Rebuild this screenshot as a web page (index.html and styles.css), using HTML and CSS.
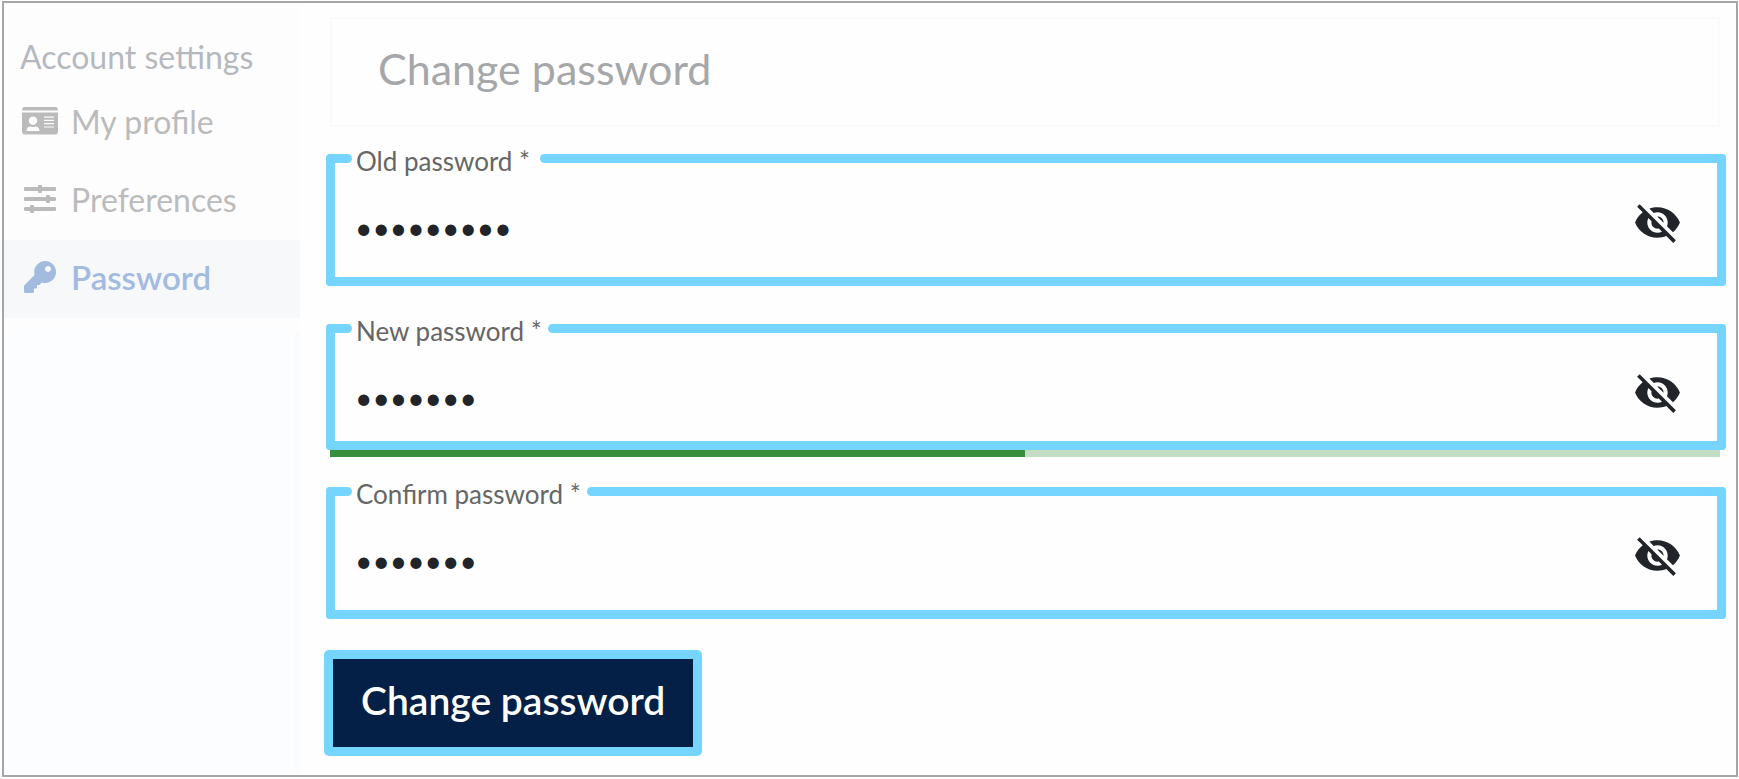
FILE: index.html
```html
<!DOCTYPE html>
<html lang="en">
<head>
<meta charset="utf-8">
<meta name="viewport" content="width=device-width, initial-scale=1">
<title>Change password</title>
<link rel="stylesheet" href="styles.css">
</head>
<body>
<svg class="sprite" aria-hidden="true">
  <symbol id="eye-off" viewBox="0 0 24 24">
    <path d="M12 7c2.76 0 5 2.24 5 5 0 .65-.13 1.26-.36 1.83l2.92 2.92c1.51-1.26 2.7-2.89 3.43-4.75-1.73-4.39-6-7.5-11-7.5-1.4 0-2.74.25-3.98.7l2.16 2.16C10.74 7.13 11.35 7 12 7zM2 4.27l2.28 2.28.46.46C3.08 8.3 1.78 10.02 1 12c1.73 4.39 6 7.5 11 7.5 1.55 0 3.03-.3 4.38-.84l.42.42L19.73 22 21 20.73 3.27 3 2 4.27zM7.53 9.8l1.55 1.55c-.05.21-.08.43-.08.65 0 1.66 1.34 3 3 3 .22 0 .44-.03.65-.08l1.55 1.55c-.67.33-1.41.53-2.2.53-2.76 0-5-2.24-5-5 0-.79.2-1.53.53-2.2zm4.31-.78l3.15 3.15.02-.16c0-1.66-1.34-3-3-3l-.17.01z"/>
  </symbol>
</svg>
<div class="frame">
  <nav class="sidebar" aria-label="Account settings">
    <div class="menu">
      <h2 class="menu-title">Account settings</h2>
      <a class="menu-item" href="#profile">
        <svg class="menu-icon" viewBox="0 0 36 32" aria-hidden="true"><path fill-rule="evenodd" d="M0 5.500V5a3 3 0 0 1 3-3h30a3 3 0 0 1 3 3v.5zM0 7.500h36V26.500a3 3 0 0 1-3 3H3a3 3 0 0 1-3-3zM11 11.500a4.200 4.200 0 1 0 .01 0zM4.500 26h13c0-3-1.500-4.500-4-4.500-1.500.7-3.500.7-5 0-2.500 0-4 1.500-4 4.500zM22 11.500v1.200h10v-1.200zM22 14.800v1.200h10v-1.200zM22 18.100v1.200h10v-1.200zM22 21.400v1.200h10v-1.200z"/></svg>
        <span>My profile</span>
      </a>
      <a class="menu-item" href="#preferences">
        <svg class="menu-icon" viewBox="0 0 36 32" aria-hidden="true"><path d="M3 4h13V3q0-1 1-1h2q1 0 1 1v1h13q1 0 1 1v2q0 1-1 1H20v1q0 1-1 1h-2q-1 0-1-1V8H3q-1 0-1-1V5q0-1 1-1zM3 14h21v-1q0-1 1-1h2q1 0 1 1v1h5q1 0 1 1v2q0 1-1 1h-5v1q0 1-1 1h-2q-1 0-1-1v-1H3q-1 0-1-1v-2q0-1 1-1zM3 24h5v-1q0-1 1-1h2q1 0 1 1v1h21q1 0 1 1v2q0 1-1 1H12v1q0 1-1 1H9q-1 0-1-1v-1H3q-1 0-1-1v-2q0-1 1-1z"/></svg>
        <span>Preferences</span>
      </a>
      <a class="menu-item active" href="#password" aria-current="page">
        <svg class="menu-icon" viewBox="0 0 36 32" aria-hidden="true"><path fill-rule="evenodd" d="M23 0a11 11 0 1 1-3.200 21.500L17.500 24H15v2.500q0 1-1 1h-2V30.500q0 1.500-1.500 1.500h-7Q2 32 2 30.500V25.300q0-.8.600-1.400L12.600 14A11 11 0 0 1 23 0zM26 5a3 3 0 1 0 .01 0z"/></svg>
        <span>Password</span>
      </a>
    </div>
  </nav>
  <main class="content">
    <header class="card"><h1 class="card-title">Change password</h1></header>
    <form class="form">
      <div class="field">
        <div class="field-top"><label class="field-label" for="old">Old password *</label></div>
        <div class="field-body">
          <input class="field-input" id="old" type="password" value="secret123" required>
          <button class="reveal" type="button" aria-label="Show old password"><svg class="reveal-icon"><use href="#eye-off"/></svg></button>
        </div>
      </div>
      <div class="field">
        <div class="field-top"><label class="field-label" for="new">New password *</label></div>
        <div class="field-body compact">
          <input class="field-input" id="new" type="password" value="secret1" required>
          <button class="reveal" type="button" aria-label="Show new password"><svg class="reveal-icon"><use href="#eye-off"/></svg></button>
        </div>
        <progress class="strength" value="50" max="100" aria-label="Password strength"></progress>
      </div>
      <div class="field">
        <div class="field-top"><label class="field-label" for="confirm">Confirm password *</label></div>
        <div class="field-body">
          <input class="field-input" id="confirm" type="password" value="secret1" required>
          <button class="reveal" type="button" aria-label="Show confirmed password"><svg class="reveal-icon"><use href="#eye-off"/></svg></button>
        </div>
      </div>
      <button class="submit" type="submit">Change password</button>
    </form>
  </main>
</div>
</body>
</html>
```
FILE: styles.css
```css
* { box-sizing: border-box; }

body {
  margin: 0;
  padding: 1px 1px 2px 2px;
  min-height: 100vh;
  display: flex;
  background: #fff;
  font-family: Lato, "Open Sans", sans-serif;
}

.sprite { display: none; }

.frame {
  flex: 1;
  display: flex;
  border: 2px solid #a6a6a6;
  background: #fefefe;
}

.sidebar {
  flex: 0 0 296px;
  background: #fbfdff;
  border-right: 5px solid #fbfbfb;
}

.menu {
  margin-right: -5px;
  padding: 29px 0 13px;
  background: #fdfdfd;
}

.menu-title {
  margin: 0;
  padding: 0 16px 2px;
  font-size: 32px;
  font-weight: 400;
  line-height: 50px;
  color: #b5b9be;
}

.menu-item {
  display: flex;
  align-items: center;
  gap: 13px;
  height: 78px;
  padding: 0 18px 4px;
  font-size: 32px;
  color: #bbb;
  text-decoration: none;
}

.menu-item.active {
  background: #f6f8fa;
  color: #a3bbdf;
  font-size: 33px;
  font-weight: 600;
}

.menu-icon {
  width: 36px;
  height: 32px;
  fill: currentColor;
}

.content {
  flex: 1;
  padding: 14px 10px 16px 24px;
}

.card {
  margin: 0 6px 27px;
  padding: 23px 46px 29px;
  border: 2px solid #fafafa;
}

.card-title {
  margin: 0;
  font-size: 43px;
  font-weight: 400;
  line-height: 54px;
  color: #a6a7a9;
}

.form { padding-left: 2px; }

.field { margin-bottom: 38px; }

.field-top {
  display: flex;
  align-items: center;
  height: 9px;
}

.field-top::before,
.field-top::after {
  content: "";
  height: 9px;
  background: #75d5ff;
}

.field-top::before {
  width: 26px;
  border-radius: 4px 5px 5px 0;
}

.field-top::after {
  flex: 1;
  border-radius: 5px 4px 0 5px;
}

.field-label {
  min-width: 188px;
  padding: 4px 6px 0 4px;
  font-size: 26px;
  line-height: 32px;
  color: #666;
}

.field-body {
  display: flex;
  align-items: flex-start;
  height: 123px;
  padding: 0 35px 0 20px;
  border: 9px solid #75d5ff;
  border-top: 0;
  border-radius: 0 0 4px 4px;
}

.field-body.compact { height: 117px; }

.field-input {
  flex: 1;
  min-width: 0;
  height: 108px;
  padding: 19px 0 0;
  border: 0;
  outline: 0;
  background: transparent;
  font: 30px/40px Lato, "Open Sans", sans-serif;
  color: #212529;
}

.reveal {
  margin-top: 35px;
  padding: 0;
  border: 0;
  background: none;
  color: #212529;
}

.reveal-icon {
  display: block;
  width: 49px;
  height: 49px;
  fill: currentColor;
}

.strength {
  display: block;
  width: calc(100% - 10px);
  height: 7px;
  margin: 0 0 -8px 4px;
  border: 0;
  appearance: none;
  background: #c3dcc4;
}

.strength::-webkit-progress-bar { background: #c3dcc4; }

.strength::-webkit-progress-value { background: #388e3c; }

.submit {
  margin: -7px 0 0 -2px;
  padding: 15px 28px 21px;
  border: 9px solid #75d5ff;
  border-radius: 5px;
  background: #052046;
  font: 600 39px/52px Lato, "Open Sans", sans-serif;
  color: #fff;
}
```
